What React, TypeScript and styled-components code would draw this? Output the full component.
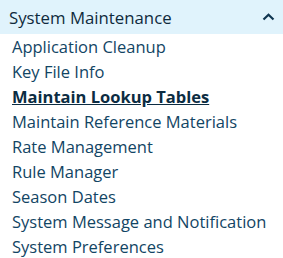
import React from "react";
import styled, { createGlobalStyle } from "styled-components";

const Global = createGlobalStyle`
  html, body { margin: 0; padding: 0; background: #ffffff; }
  body { font-family: "Open Sans", "Noto Sans", sans-serif; }
`;

const Panel = styled.div`
  width: 283px;
  display: flex;
  flex-direction: column;
`;

const Header = styled.div`
  height: 34px;
  background: #e0f3fc;
  display: flex;
  align-items: center;
  justify-content: space-between;
  padding: 0 8px 0 9px;
  box-sizing: border-box;
`;

const Title = styled.span`
  font-size: 16.8px;
  color: #0f2a3d;
`;

const List = styled.ul`
  list-style: none;
  margin: 0;
  padding: 0 0 0 12px;
`;

const Item = styled.li<{ $active?: boolean }>`
  font-size: 16.5px;
  line-height: 25px;
  height: 25px;
  color: ${(p) => (p.$active ? "#0c2c42" : "#124564")};
  font-weight: ${(p) => (p.$active ? 700 : 400)};
  text-decoration: ${(p) => (p.$active ? "underline" : "none")};
  white-space: nowrap;
`;

const items = [
  "Application Cleanup",
  "Key File Info",
  "Maintain Lookup Tables",
  "Maintain Reference Materials",
  "Rate Management",
  "Rule Manager",
  "Season Dates",
  "System Message and Notification",
  "System Preferences",
];

export default function App() {
  return (
    <>
      <Global />
      <Panel>
        <Header>
          <Title>System Maintenance</Title>
          <svg width="13" height="8" viewBox="0 0 13 8">
            <path d="M1.5 6.5 L6.5 1.8 L11.5 6.5" fill="none" stroke="#0f3550" strokeWidth="2.2" />
          </svg>
        </Header>
        <List>
          {items.map((t) => (
            <Item key={t} $active={t === "Maintain Lookup Tables"}>
              {t}
            </Item>
          ))}
        </List>
      </Panel>
    </>
  );
}
